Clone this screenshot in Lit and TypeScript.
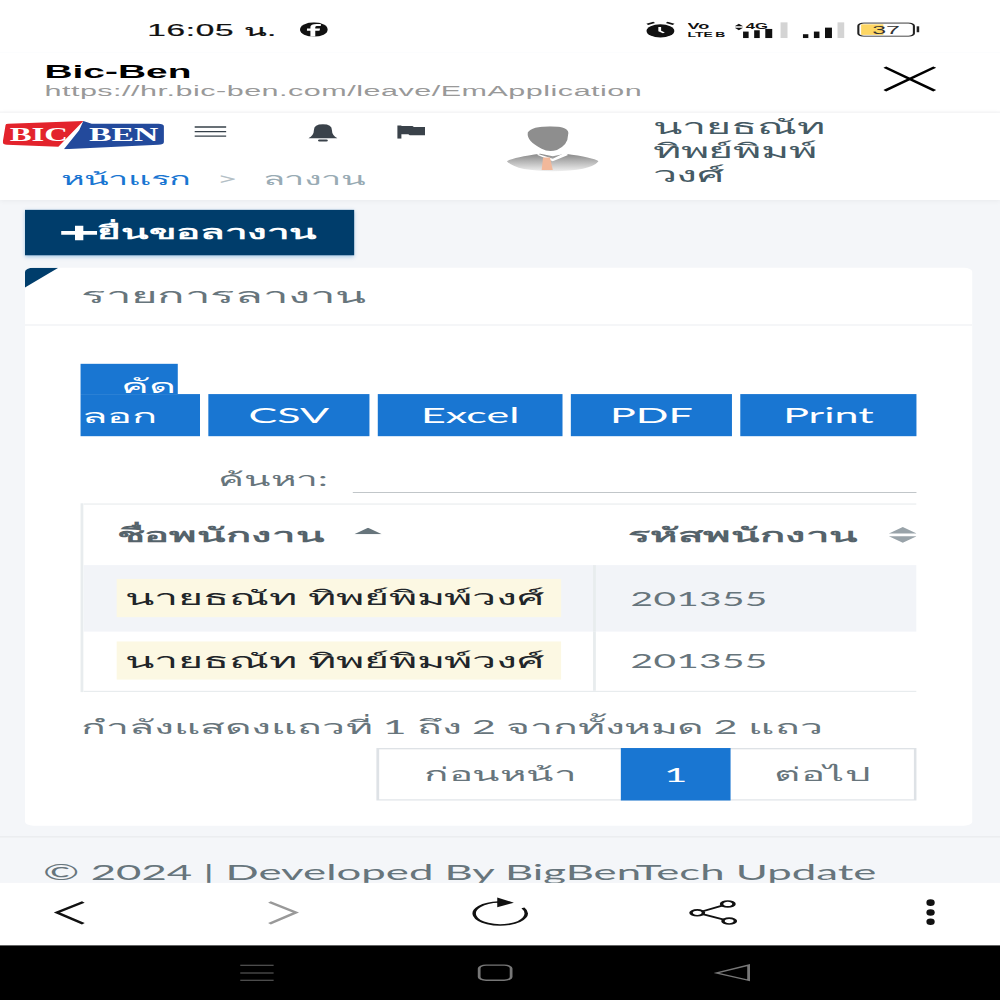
import { LitElement, html, css } from "lit";
import { customElement } from "lit/decorators.js";

@customElement("app-root")
export class AppRoot extends LitElement {
  static styles = css`
    :host { display: block; width: 1000px; height: 1000px; overflow: hidden; background: #fff; }
    * { box-sizing: border-box; }
    .screen {
      width: 720px; height: 1520px; transform: scale(1.3889, 0.6579); transform-origin: 0 0;
      display: flex; flex-direction: column; background: #f4f6f9; overflow: hidden;
      font-family: Lato, "Noto Sans", Roboto, "Liberation Sans", sans-serif; color: #67757c; position: relative;
    }
    .status { height: 80px; background: #fff; display: flex; align-items: center; padding: 10px 0 0 106px; flex: none; color: #111; font-size: 24px; }
    .time { width: 110px; font-family: "Liberation Sans", sans-serif; letter-spacing: 0.5px; white-space: nowrap; -webkit-text-stroke: .3px #111; }
    .sicons { margin-left: auto; margin-right: 58px; display: flex; align-items: center; gap: 9px; }
    .sicons svg { display: block; }
    .volte { margin-right: -3px; }
    .chrome { height: 91px; flex: none; background: #fff; border-bottom: 1px solid #e4e6e8; display: flex; justify-content: space-between; padding: 0 46px 0 32px; }
    .ctitle { font: bold 28px/32px "Liberation Sans", sans-serif; color: #000; padding-top: 13px; height: 47px; }
    .curl { font: 22px/24px "Liberation Sans", sans-serif; color: #999; letter-spacing: 0.35px; margin-top: 0; white-space: nowrap; }
    .x { margin-top: 20px; }
    .head { height: 133px; flex: none; background: #fff; box-shadow: 0 2px 6px rgba(0,0,0,.06); position: relative; }
    .toprow { height: 80px; display: flex; align-items: center; }
    .logo { margin-left: 2px; margin-top: -12px; flex: none; }
    .burger { margin-left: 16px; margin-top: -22px; }
    .bell { margin-left: 59px; margin-top: -20px; }
    .flag { margin-left: 43px; margin-top: -22px; }
    .avatar { margin-left: 59px; margin-top: 32px; }
    .uname { position: absolute; left: 470px; top: 2px; width: 135px; font-size: 31px; line-height: 37px; color: #455a64; }
    .crumb { display: flex; position: absolute; left: 44px; top: 78px; font-size: 26px; line-height: 44px; letter-spacing: -.6px; }
    .crumb a { color: #1976d2; width: 112px; }
    .crumb .sep { font-style: normal; color: #b4c0c6; width: 33px; }
    .crumb .cur2 { font-style: normal; color: #99abb4; }
    .main { padding: 15px 18px 0; flex: 1; }
    .add { height: 69px; width: 237px; background: #003d6b; color: #fff; font-size: 29px; font-weight: 600; display: flex; align-items: center; padding-left: 26px; box-shadow: 0 2px 4px rgba(30,120,200,.35); }
    .card { margin-top: 19px; width: 682px; height: 848px; background: #fff; border-radius: 6px; position: relative; overflow: hidden; }
    .corner { position: absolute; left: 0; top: 0; width: 0; height: 0; border-top: 30px solid #003d6b; border-right: 24px solid transparent; }
    .ctop { height: 88px; border-bottom: 2px solid #f0f2f4; padding: 18px 0 0 40px; font-size: 32.800px; line-height: 48px; color: #67757c; }
    .cbody { padding: 0 0 0 40px; width: 642px; overflow: hidden; }
    .btns { margin-top: 58px; height: 110px; display: flex; gap: 6px; align-items: flex-end; }
    .btn { background: #1976d2; color: #fff; height: 64px; font-size: 31px; display: flex; align-items: center; justify-content: center; flex: none; }
    .copy { width: 86px; height: 110px; position: relative; background: transparent; display: block; }
    .copy::before { content: ""; position: absolute; left: 0; top: 0; width: 70px; height: 46px; background: #1976d2; }
    .copy::after { content: ""; position: absolute; left: 0; top: 46px; width: 86px; height: 64px; background: #1976d2; }
    .copy span { position: absolute; z-index: 1; font-size: 30px; line-height: 40px; color: #fff; }
    .c1 { left: 29px; top: 12px; }
    .c2 { left: 1px; top: 58px; }
    .search { display: flex; margin-top: 40px; height: 46px; align-items: flex-end; }
    .search label { margin-left: 99px; width: 97px; font-size: 28px; line-height: 36px; margin-bottom: 4px; }
    .search div { flex: 1; border-bottom: 1px solid #a0a8ad; height: 46px; }
    .tbl { margin-top: 16px; width: 602px; border-left: 2px solid #e8ecee; overflow: hidden; }
    .tr { display: flex; }
    .th { height: 94px; border-top: 2px solid #e8ecee; font-weight: 700; font-size: 30px; align-items: center; color: #55636b; }
    .td1 { width: 369px; padding-left: 24px; flex: none; display: flex; align-items: center; }
    .td2 { flex: 1; padding-left: 23px; display: flex; align-items: center; white-space: nowrap; min-width: 0; }
    .tr.row { height: 101px; }
    .tr.row .td1 { border-right: 2px solid #e8ecee; }
    .tr.row.odd { background: #f2f4f8; }
    .tr.row2 { height: 92px; border-bottom: 2px solid #e8ecee; }
    .tr.row2 .td1 { border-right: 2px solid #e8ecee; }
    .mark { background: #fcf8e3; padding: 0 6px; height: 58px; line-height: 56px; font-size: 31px; color: #212529; white-space: nowrap; width: 320px; overflow: hidden; margin-top: -2px; }
    .code { font-size: 28px; color: #67757c; padding-left: 25px; letter-spacing: .2px; }
    .sort1 { margin-left: 21px; margin-top: -12px; }
    .sort2 { margin-left: 22px; flex: none; }
    .info { margin-top: 33px; font-size: 29.500px; line-height: 40px; white-space: nowrap; }
    .pager { display: flex; margin: 12px 0 0 213px; height: 80px; width: 389px; border: 2px solid #dee2e6; font-size: 29px; }
    .pager div { display: flex; align-items: center; justify-content: center; }
    .prev { width: 174px; }
    .cur { width: 79px; background: #1976d2; color: #fff; margin: -2px 0; }
    .next { flex: 1; }
    .foot { position: absolute; left: 0; right: 0; top: 1271px; height: 72px; background: #f4f6f9; border-top: 2px solid #e9ebee; padding: 32px 0 0 31px; font-size: 31.500px; line-height: 40px; color: #67757c; white-space: nowrap; overflow: hidden; }
    .nav { position: absolute; left: 0; right: 0; top: 1342px; height: 95px; background: #fff; display: block; }
    .sys { position: absolute; left: 0; right: 0; top: 1437px; height: 83px; background: #000; }
    .nav svg, .sys svg { position: absolute; left: 0; top: 0; width: 720px; height: 100%; }
  `;

  render() {
    return html`<div class="screen">
      <div class="status">
        <span class="time">16:05 น.</span>
        <svg width="20" height="22" viewBox="0 0 20 26" preserveAspectRatio="none"><ellipse cx="10" cy="13" rx="10" ry="13" fill="#111"/><path d="M11 26V15h3l.5-4H11V8.500c0-1.200.5-2 2-2h2V3h-3C9 3 7.500 5 7.500 8v3H5v4h2.500v11z" fill="#fff"/></svg>
        <div class="sicons">
          <svg width="21" height="26" viewBox="0 0 21 26"><ellipse cx="10.500" cy="15" rx="10" ry="10" fill="#111"/><path d="M1 5 6 2M20 5 15 2" stroke="#111" stroke-width="2.500"/><path d="M10 9v6l3 3" stroke="#fff" stroke-width="2" fill="none"/></svg>
          <svg class="volte" width="27" height="24" viewBox="0 0 27 24"><text x="0" y="11" font-family="Liberation Sans" font-weight="700" font-size="13" fill="#111">Vo</text><text x="0" y="23" font-family="Liberation Sans" font-weight="700" font-size="10" fill="#111">LTE</text><text x="20" y="23" font-family="Liberation Sans" font-weight="700" font-size="10" fill="#111">B</text></svg>
          <svg width="41" height="26" viewBox="0 0 41 26"><path d="M1 8l3-4 3 4zM1 10l3 4 3-4z" fill="#111"/><text x="9" y="12" font-family="Liberation Sans" font-weight="700" font-size="14" fill="#111" textLength="16" lengthAdjust="spacingAndGlyphs">4G</text><g fill="#111"><rect x="7" y="16" width="4" height="10"/><rect x="15" y="14" width="4" height="12"/><rect x="23" y="12" width="5" height="14"/></g><rect x="34" y="2" width="5" height="24" fill="#d4d4d4"/></svg>
          <svg width="30" height="26" viewBox="0 0 30 26"><g fill="#111"><rect x="0" y="20" width="4" height="6"/><rect x="8" y="16" width="4" height="10"/><rect x="16" y="10" width="5" height="16"/></g><rect x="25" y="2" width="5" height="24" fill="#d4d4d4"/></svg>
          <svg width="45" height="22" viewBox="0 0 45 22"><rect x="1" y="1" width="40" height="20" rx="4" fill="#fff" stroke="#222" stroke-width="1.500"/><rect x="3" y="3" width="16" height="16" fill="#fdd663"/><text x="21" y="18" font-size="18" text-anchor="middle" fill="#333" font-family="Liberation Sans">37</text><rect x="43" y="6" width="2" height="9" fill="#222"/></svg>
        </div>
      </div>
      <div class="chrome">
        <div>
          <div class="ctitle">Bic-Ben</div>
          <div class="curl">https://hr.bic-ben.com/leave/EmApplication</div>
        </div>
        <svg class="x" width="38" height="40" viewBox="0 0 38 40"><path d="M1 2 37 38M37 2 1 38" stroke="#000" stroke-width="3"/></svg>
      </div>
      <div class="head">
        <div class="toprow">
          <svg class="logo" width="122" height="44" viewBox="0 0 122 44">
            <path d="M2 7Q2 5 4 5L58 1 40 40 3 37Q0 37 0 33z" fill="#e3232c"/>
            <path d="M58 1l6 4h48q4 0 4 4v24q0 4-4 4L44 44 55 15z" fill="#234a9c"/>
            <text x="5" y="31" font-family="Liberation Serif" font-weight="700" font-size="28" fill="#fff" textLength="42" lengthAdjust="spacingAndGlyphs">BIC</text>
            <text x="62" y="31" font-family="Liberation Serif" font-weight="700" font-size="28" fill="#fff" textLength="50" lengthAdjust="spacingAndGlyphs">BEN</text>
          </svg>
          <svg class="burger" width="23" height="18" viewBox="0 0 23 18"><path d="M0 2h23M0 9h23M0 16h23" stroke="#37414a" stroke-width="2"/></svg>
          <svg class="bell" width="21" height="30" viewBox="0 0 21 30"><path d="M0 24Q4 20 4 12 4 3 10.500 3T17 12q0 8 4 12z" fill="#3a424a"/><rect x="7" y="26" width="7" height="3" rx="1" fill="#3a424a"/></svg>
          <svg class="flag" width="20" height="22" viewBox="0 0 20 28" preserveAspectRatio="none"><path d="M0 2h3v26H0zM3 3h8l1 2h8v16H9l-1-2H3z" fill="#3a424a"/></svg>
          <svg class="avatar" width="66" height="70" viewBox="0 0 66 74" preserveAspectRatio="none">
            <defs><linearGradient id="sh" x1="0" y1="0" x2="0" y2="1"><stop offset="0" stop-color="#888"/><stop offset="1" stop-color="#eee"/></linearGradient></defs>
            <path d="M0 56Q4 50 24 44L33 48 42 44Q62 50 66 56 60 72 33 72 6 72 0 56z" fill="url(#sh)"/>
            <path d="M22 44 33 52 42 42 44 46 33 56 22 46z" fill="#fff"/>
            <path d="M26 50h5l2 20h-8z" fill="#f2b89a"/>
            <path d="M15 10Q18 0 31 0 46 0 44 14 44 30 36 38 30 42 25 36 14 24 15 10z" fill="#8e8e8e"/>
          </svg>
        </div>
        <div class="uname">นายธณัท ทิพย์พิมพ์วงศ์</div>
        <div class="crumb"><a>หน้าแรก</a><span class="sep">&gt;</span><span class="cur2">ลางาน</span></div>
      </div>
      <div class="main">
        <div class="add"><svg width="26" height="26" viewBox="0 0 26 26"><path d="M10 2h6v8h10v6H16v8h-6v-8H0v-6h10z" fill="#fff"/></svg><span>ยื่นขอลางาน</span></div>
        <div class="card">
          <div class="corner"></div>
          <div class="ctop">รายการลางาน</div>
          <div class="cbody">
            <div class="btns">
              <div class="btn copy"><span class="c1">คัด</span><span class="c2">ลอก</span></div>
              <div class="btn" style="width:116px">CSV</div>
              <div class="btn" style="width:133px">Excel</div>
              <div class="btn" style="width:116px">PDF</div>
              <div class="btn" style="width:127px">Print</div>
            </div>
            <div class="search"><label>ค้นหา:</label><div></div></div>
            <div class="tbl">
              <div class="tr th">
                <div class="td1">ชื่อพนักงาน<svg class="sort1" width="20" height="10" viewBox="0 0 20 10"><path d="M0 10 10 0l10 10z" fill="#67757c"/></svg></div>
                <div class="td2">รหัสพนักงาน<svg class="sort2" width="20" height="30" viewBox="0 0 20 30"><path d="M0 13 10 3l10 10zM0 17l10 10 10-10z" fill="#99a3a9"/></svg></div>
              </div>
              <div class="tr row odd"><div class="td1"><div class="mark">นายธณัท ทิพย์พิมพ์วงศ์</div></div><div class="td2 code">201355</div></div>
              <div class="tr row2"><div class="td1"><div class="mark">นายธณัท ทิพย์พิมพ์วงศ์</div></div><div class="td2 code">201355</div></div>
            </div>
            <div class="info">กำลังแสดงแถวที่ 1 ถึง 2 จากทั้งหมด 2 แถว</div>
            <div class="pager"><div class="prev">ก่อนหน้า</div><div class="cur">1</div><div class="next">ต่อไป</div></div>
          </div>
        </div>
      </div>
      <div class="foot">© 2024 | Developed By BigBenTech Update</div>
      <div class="nav"><svg viewBox="0 0 720 95" preserveAspectRatio="none">
        <path d="M60 29 41 45 60 62" fill="none" stroke="#111" stroke-width="3"/>
        <path d="M194 29l19 16-19 17" fill="none" stroke="#999" stroke-width="3"/>
        <path d="M359 29A18.700 17.500 0 1 0 376.500 38" fill="none" stroke="#111" stroke-width="2.500"/><path d="M358 22l12 8-12 7z" fill="#111"/>
        <path d="M502 45.500 524 32M502 45.500 525 58" stroke="#111" stroke-width="2.500" fill="none"/>
        <g fill="#fff" stroke="#111" stroke-width="2.500"><circle cx="502" cy="45.500" r="4.500"/><circle cx="524" cy="32" r="4.500"/><circle cx="525" cy="58" r="4.500"/></g>
        <g fill="#111"><ellipse cx="670" cy="30" rx="3" ry="5"/><ellipse cx="670" cy="45" rx="3" ry="5"/><ellipse cx="670" cy="59" rx="3" ry="5"/></g>
      </svg></div>
      <div class="sys"><svg viewBox="0 0 720 83" preserveAspectRatio="none">
        <path d="M173 30h24M173 42h24M173 53h24" stroke="#666" stroke-width="1.500" fill="none"/>
        <rect x="345" y="30" width="23" height="23" rx="5" fill="none" stroke="#777" stroke-width="2"/>
        <path d="M539 30v23L516 42z" fill="none" stroke="#777" stroke-width="2"/>
      </svg></div>
    </div>`;
  }
}
